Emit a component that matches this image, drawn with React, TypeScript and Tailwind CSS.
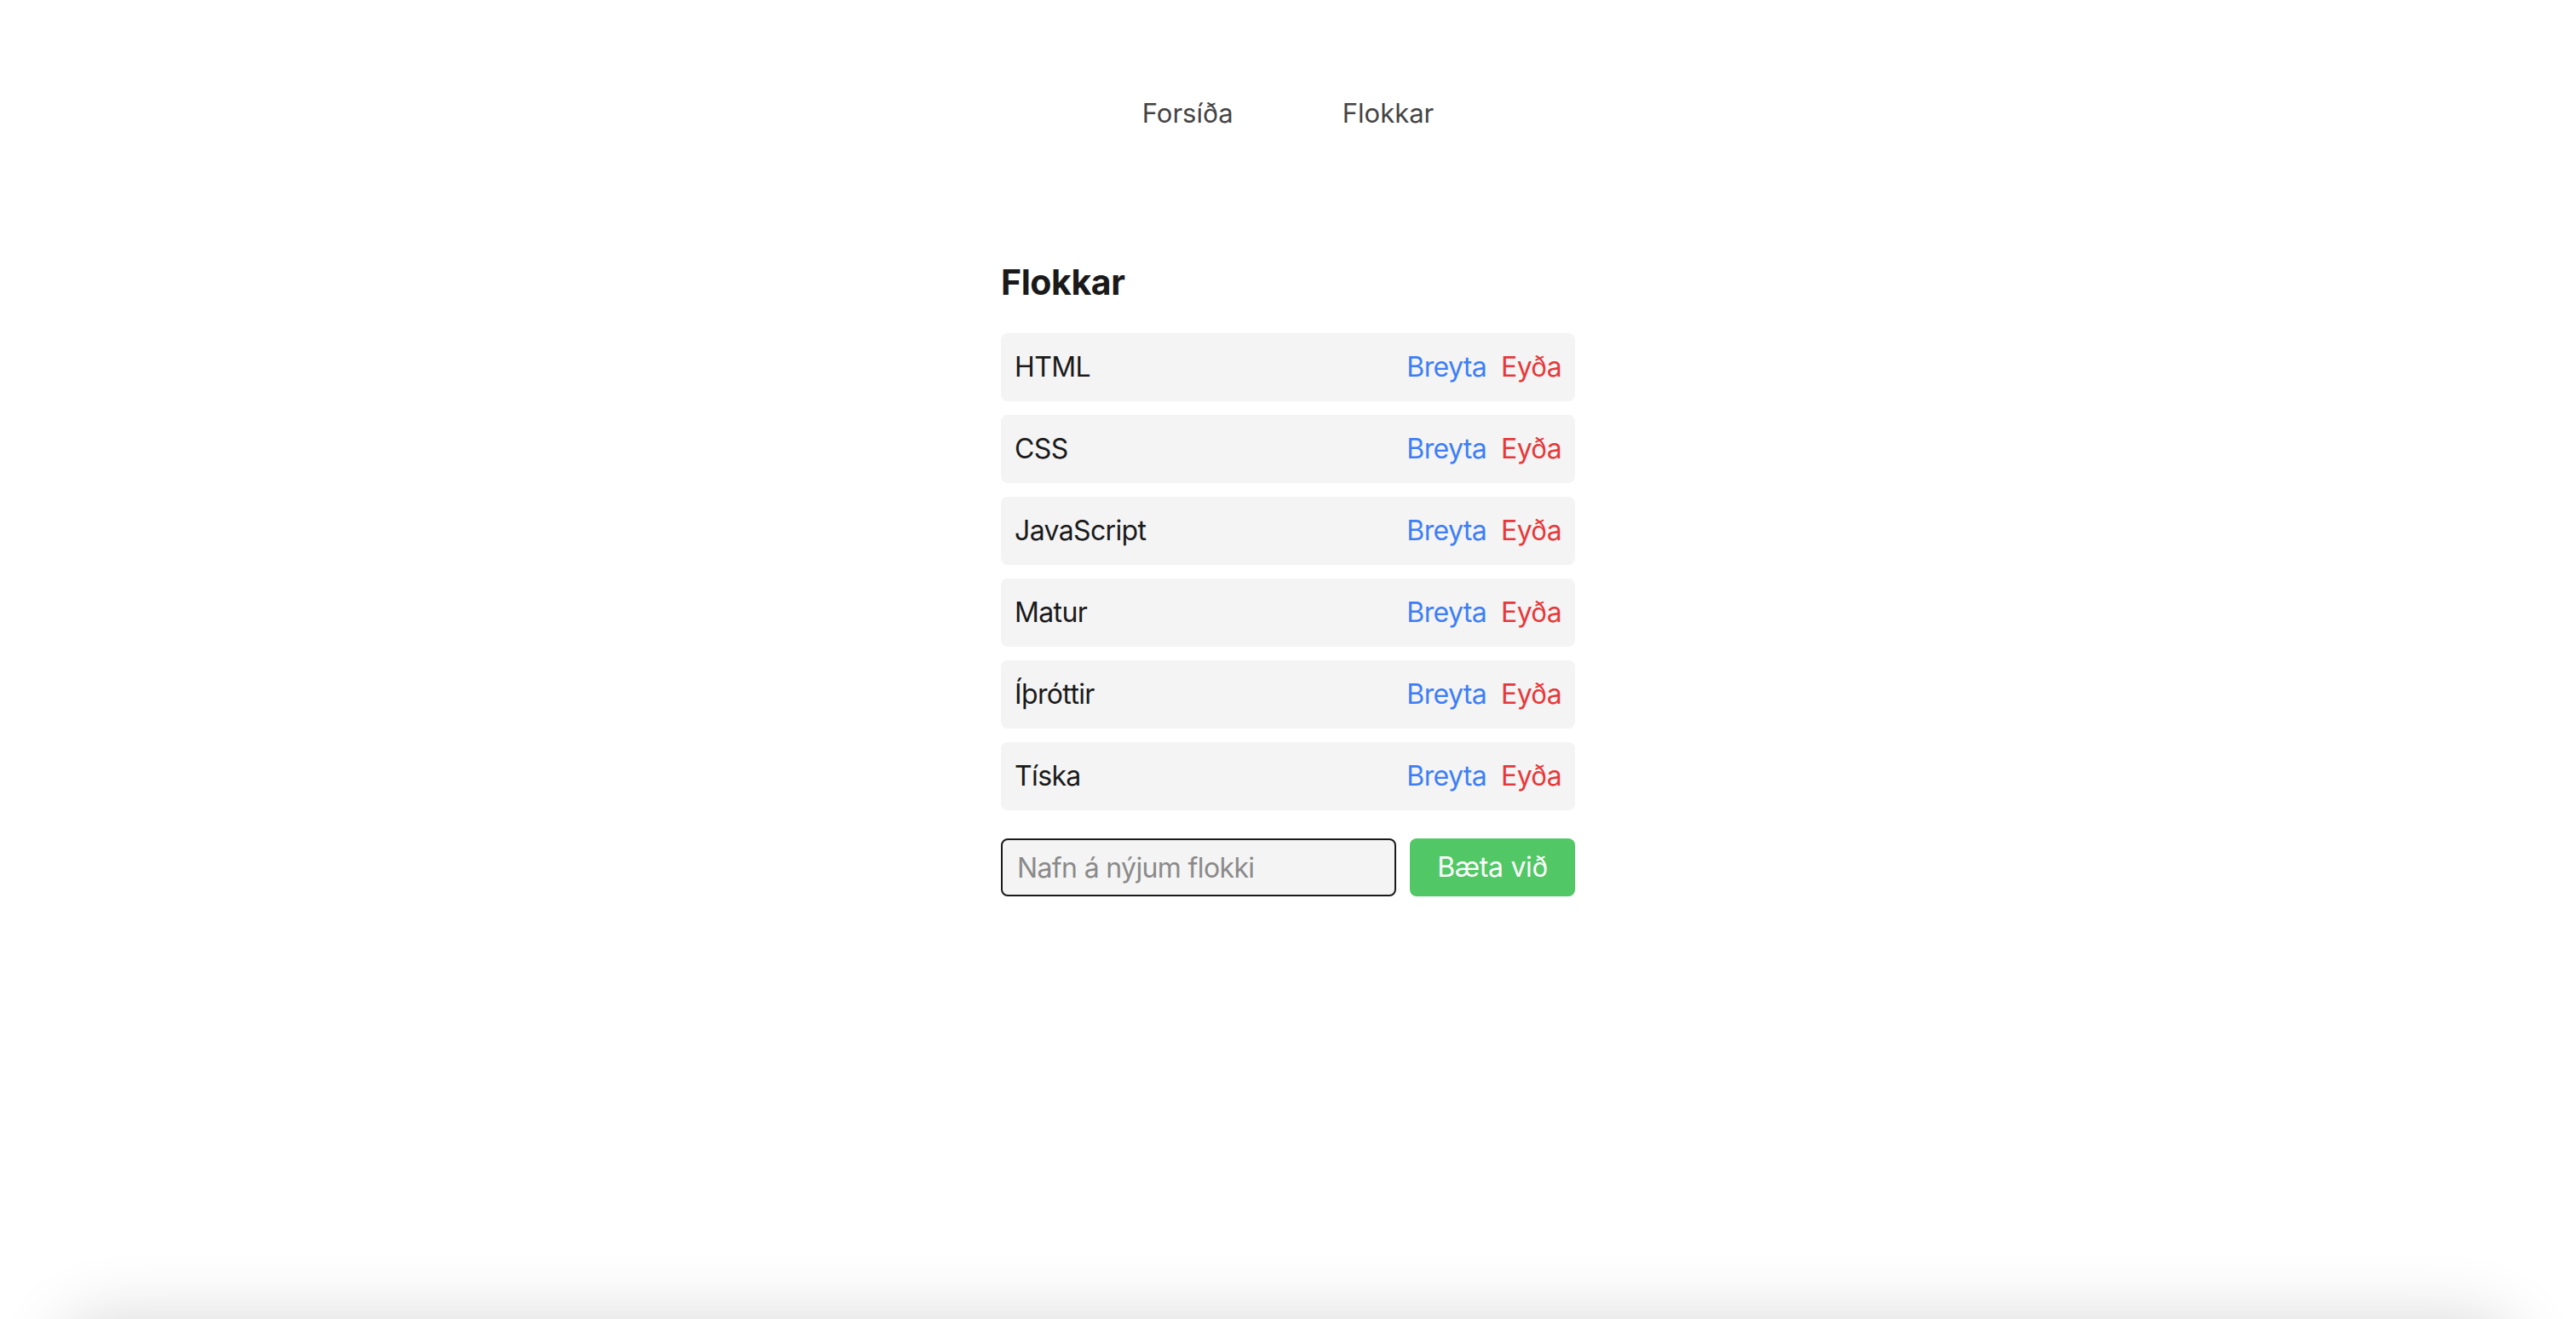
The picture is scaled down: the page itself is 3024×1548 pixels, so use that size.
import { useState } from 'react';

const initialCategories = ['HTML', 'CSS', 'JavaScript', 'Matur', 'Íþróttir', 'Tíska'];

export default function App() {
  const [categories, setCategories] = useState(initialCategories);
  const [name, setName] = useState('');

  const handleAdd = () => {
    if (!name.trim()) return;
    setCategories(prev => [...prev, name.trim()]);
    setName('');
  };

  return (
    <div
      className="flex flex-col h-screen overflow-hidden bg-white text-[#1a1a1a]"
      style={{ fontFamily: 'Inter, "Noto Sans", sans-serif' }}
    >
      {/* Nav */}
      <nav className="flex justify-center gap-[128px] pt-[110px]">
        <a href="#" className="text-[31px] leading-[46px] text-[#444]">Forsíða</a>
        <a href="#" className="text-[31px] leading-[46px] text-[#444]">Flokkar</a>
      </nav>

      {/* Content */}
      <main className="mx-auto w-[674px] pt-[151px]">
        <h1 className="text-[41px] leading-[48px] font-bold tracking-[-0.01em] mb-[36px]">Flokkar</h1>
        <ul className="flex flex-col gap-[16px]">
          {categories.map(cat => (
            <li
              key={cat}
              className="flex items-center justify-between h-[80px] px-[16px] rounded-[8px] bg-[#f4f4f4]"
            >
              <span className="text-[32px] tracking-[-0.02em]">{cat}</span>
              <div className="flex gap-[17px] text-[32px] tracking-[-0.02em]">
                <button className="text-[#3d7ef7]">Breyta</button>
                <button
                  className="text-[#e5393b]"
                  onClick={() => setCategories(prev => prev.filter(c => c !== cat))}
                >
                  Eyða
                </button>
              </div>
            </li>
          ))}
        </ul>
        <div className="flex gap-[16px] mt-[33px]">
          <input
            value={name}
            onChange={e => setName(e.target.value)}
            placeholder="Nafn á nýjum flokki"
            className="w-[464px] h-[68px] px-[17px] text-[32px] tracking-[-0.02em] bg-[#f4f4f4] border-2 border-[#1a1a1a] rounded-[8px] placeholder:text-[#8a8a8a] outline-none"
          />
          <button
            onClick={handleAdd}
            className="flex-1 h-[68px] rounded-[8px] bg-[#51c765] text-white text-[32px] tracking-[-0.01em]"
          >
            Bæta við
          </button>
        </div>
      </main>

      {/* Bottom window shadow */}
      <div className="mt-auto -mb-[100px] mx-[70px] h-[100px] shrink-0 rounded-[60px] shadow-[0_0_80px_rgba(0,0,0,0.16)]" />
    </div>
  );
}
